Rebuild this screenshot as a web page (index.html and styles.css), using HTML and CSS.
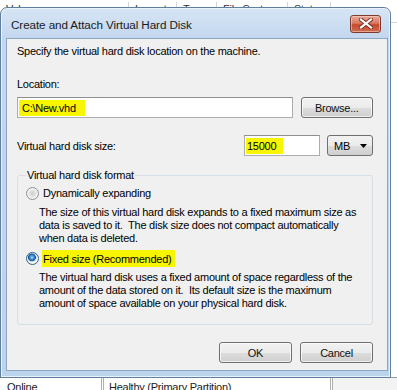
FILE: index.html
```html
<!DOCTYPE html>
<html lang="en">
<head>
    <meta charset="UTF-8">
    <title>Create and Attach Virtual Hard Disk</title>
    <link rel="stylesheet" href="styles.css">
</head>
<body>
<div class="backdrop">
    <div class="list-header">
        <span class="col col-volume">Volume</span>
        <span class="col col-layout">Layout</span>
        <span class="col col-type">Type</span>
        <span class="col col-fs">File System</span>
        <span class="col col-status">Status</span>
    </div>
    <div class="list-footer">
        <span class="cell cell-status">Online</span>
        <span class="cell cell-health">Healthy (Primary Partition)</span>
        <span class="cell cell-rest"></span>
    </div>
</div>

<div class="window">
    <div class="title-bar">
        <span class="title">Create and Attach Virtual Hard Disk</span>
        <span class="close-btn">
            <svg width="14" height="11" viewBox="0 0 14 11">
                <path d="M2 1.5 L12 9.5 M12 1.5 L2 9.5" stroke="#7a2a1c" stroke-width="4" stroke-linecap="square"/>
                <path d="M2 1.5 L12 9.5 M12 1.5 L2 9.5" stroke="#ffffff" stroke-width="2.2" stroke-linecap="square"/>
            </svg>
        </span>
    </div>

    <div class="client">
        <p class="intro">Specify the virtual hard disk location on the machine.</p>

        <label class="field-label">Location:</label>
        <div class="row location-row">
            <div class="text-box location-box"><span class="hl hl-path">C:\New.vhd</span></div>
            <span class="push-btn">Browse...</span>
        </div>

        <div class="row size-row">
            <span class="size-label">Virtual hard disk size:</span>
            <div class="text-box size-box"><span class="hl hl-size">15000</span></div>
            <span class="combo">MB
                <svg width="7" height="4" viewBox="0 0 7 4"><path d="M0 0 H7 L3.5 4 Z" fill="#000"/></svg>
            </span>
        </div>

        <fieldset class="group">
            <legend>Virtual hard disk format</legend>
            <div class="option">
                <span class="radio"></span>
                <span class="option-label">Dynamically expanding</span>
            </div>
            <p class="desc">The size of this virtual hard disk expands to a fixed maximum size as data is saved to it.&nbsp; The disk size does not compact automatically when data is deleted.</p>
            <div class="option option-fixed">
                <span class="radio checked"></span>
                <span class="option-label hl hl-fixed">Fixed size (Recommended)</span>
            </div>
            <p class="desc">The virtual hard disk uses a fixed amount of space regardless of the amount of the data stored on it.&nbsp; Its default size is the maximum amount of space available on your physical hard disk.</p>
        </fieldset>

        <div class="buttons">
            <span class="push-btn">OK</span>
            <span class="push-btn">Cancel</span>
        </div>
    </div>
</div>
</body>
</html>
```

FILE: styles.css
```css
body {
    margin: 0;
    width: 397px;
    height: 390px;
    overflow: hidden;
    position: relative;
    background: #ffffff;
    font-family: "Liberation Sans", Arial, sans-serif;
    font-size: 11px;
    letter-spacing: -0.25px;
    color: #000;
}
.backdrop {
    display: flex;
    flex-direction: column;
    justify-content: space-between;
    height: 390px;
}
.list-header {
    display: flex;
    height: 20px;
    padding-top: 2px;
    border-bottom: 1px solid #d5d5d5;
}
.col {
    padding: 0 6px;
    border-right: 1px solid #d5d5d5;
    color: #333;
    line-height: 14px;
}
.col-volume { width: 116px; }
.col-layout { width: 35px; }
.col-type { width: 27px; }
.col-fs { width: 58px; }
.list-footer {
    display: flex;
    height: 12px;
    border-top: 1px solid #9a9a9a;
}
.cell {
    line-height: 14px;
    padding-top: 2px;
    color: #222;
}
.cell-status {
    width: 94px;
    padding-left: 7px;
    border-right: 3px double #b0b0b0;
}
.cell-health {
    width: 221px;
    padding-left: 5px;
    border-right: 3px double #b0b0b0;
}
.cell-rest {
    flex: 1;
    background: #f3f3f3;
}

.window {
    position: absolute;
    left: 0;
    top: 7px;
    width: 389px;
    height: 369px;
    border: 1px solid #5f7f9f;
    border-radius: 7px 7px 0 0;
    background: linear-gradient(to bottom, #d7e6f5 0, #c3d7ee 30px, #bcd3ec 100%);
    box-shadow: inset 0 0 0 1px #e9f1fa;
    display: flex;
    flex-direction: column;
}
.title-bar {
    display: flex;
    align-items: center;
    justify-content: space-between;
    height: 30px;
    padding: 0 9px 0 10px;
}
.title {
    font-size: 11.7px;
    letter-spacing: -0.1px;
    color: #1b1b1b;
    padding-top: 2px;
}
.close-btn {
    display: flex;
    align-items: center;
    justify-content: center;
    width: 29px;
    height: 16px;
    margin-top: 1px;
    border: 1px solid #7e3a2c;
    border-radius: 3px;
    background: linear-gradient(to bottom, #e9a999 0, #d97a63 45%, #c24a2f 55%, #d26c4f 100%);
    box-shadow: inset 0 0 0 1px rgba(255, 220, 210, 0.5);
}
.client {
    flex: 1;
    margin: 0 2px 6px 5px;
    padding: 5px 14px 0 10px;
    background: #f0f0f0;
    border: 1px solid #8ea6c0;
    display: flex;
    flex-direction: column;
}
.intro {
    margin: 0;
    line-height: 14px;
}
.field-label {
    margin-top: 19px;
    line-height: 14px;
}
.row {
    display: flex;
    align-items: center;
}
.location-row {
    margin-top: 6px;
    gap: 8px;
}
.text-box {
    display: flex;
    align-items: center;
    height: 19px;
    padding: 0 1px;
    background: #fff;
    border: 1px solid #abadb3;
    border-top-color: #8e8f8f;
}
.location-box {
    width: 274px;
}
.hl {
    background: #f7f500;
}
.hl-path {
    padding: 2px 9px 2px 3px;
}
.push-btn {
    display: flex;
    align-items: center;
    justify-content: center;
    width: 71px;
    height: 19px;
    border: 1px solid #707070;
    border-radius: 3px;
    background: linear-gradient(to bottom, #f2f2f2 0, #ebebeb 50%, #dddddd 51%, #cfcfcf 100%);
    box-shadow: inset 0 0 0 1px rgba(255, 255, 255, 0.7);
    color: #111;
}
.size-row {
    margin-top: 17px;
}
.size-label {
    flex: 1;
}
.size-box {
    width: 72px;
    margin-right: 7px;
}
.hl-size {
    padding: 2px 7px 2px 1px;
}
.combo {
    display: flex;
    align-items: center;
    justify-content: space-between;
    width: 33px;
    height: 19px;
    padding: 0 5px 0 6px;
    border: 1px solid #707070;
    border-radius: 3px;
    background: linear-gradient(to bottom, #f2f2f2 0, #ebebeb 50%, #dddddd 51%, #cfcfcf 100%);
}
.group {
    margin: 12px 0 0;
    padding: 4px 8px 14px;
    border: 1px solid #d5dfe5;
    border-radius: 3px;
    min-width: 0;
}
.group legend {
    padding: 0 1px;
    line-height: 14px;
}
.option {
    display: flex;
    align-items: center;
    gap: 4px;
    height: 14px;
}
.option-fixed {
    margin-top: 6px;
}
.radio {
    width: 11px;
    height: 11px;
    border: 1px solid #8e8f8f;
    border-radius: 50%;
    background: radial-gradient(circle at 50% 50%, #cfcfcf 0, #e2e2e2 3px, #f4f4f4 5px);
}
.radio.checked {
    border-color: #2c628b;
    background: radial-gradient(circle at 45% 40%, #a9dcff 0, #2e7dc8 2.5px, #1c4f86 3.6px, #d8e6f2 4.2px, #f6f6f6 5.5px);
}
.option-label {
    line-height: 14px;
}
.hl-fixed {
    padding: 2px 3px 1px 1px;
    margin-left: -1px;
}
.desc {
    margin: 6px 0 0 13px;
    line-height: 13px;
    width: 322px;
}
.buttons {
    display: flex;
    justify-content: flex-end;
    gap: 8px;
    margin-top: 17px;
}
```
